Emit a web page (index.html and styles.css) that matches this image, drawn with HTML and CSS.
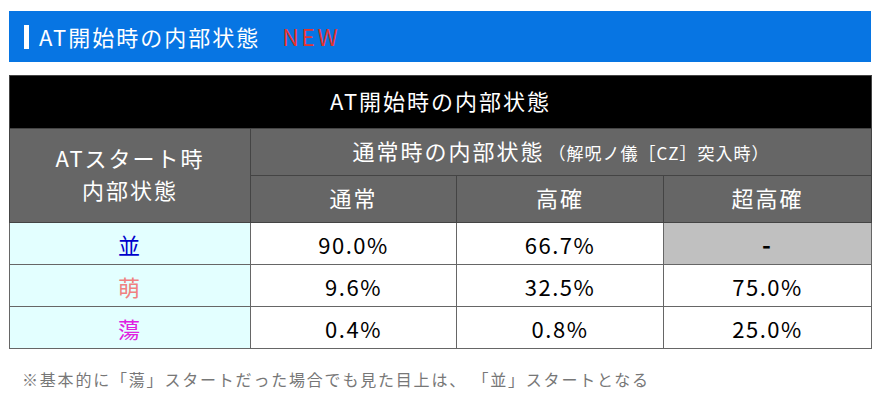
FILE: index.html
```html
<!DOCTYPE html>
<html lang="ja">
<head>
<meta charset="utf-8">
<title>AT開始時の内部状態</title>
<link rel="stylesheet" href="styles.css">
</head>
<body>
<div class="page">
  <h2 class="title"><span class="bar"></span><span class="title-text">AT開始時の内部状態</span><span class="new">NEW</span></h2>
  <table class="rate">
    <colgroup><col class="c1"><col class="c2"><col class="c3"><col class="c4"></colgroup>
    <thead>
      <tr><th colspan="4" class="top">AT開始時の内部状態</th></tr>
      <tr><th rowspan="2" class="h first">ATスタート時<br>内部状態</th><th colspan="3" class="h">通常時の内部状態<span class="sub">（解呪ノ儀［CZ］突入時）</span></th></tr>
      <tr><th class="h">通常</th><th class="h">高確</th><th class="h">超高確</th></tr>
    </thead>
    <tbody>
      <tr><td class="state nami">並</td><td class="num">90.0%</td><td class="num">66.7%</td><td class="none"><span class="dash">-</span></td></tr>
      <tr><td class="state moe">萌</td><td class="num">9.6%</td><td class="num">32.5%</td><td class="num">75.0%</td></tr>
      <tr><td class="state to">蕩</td><td class="num">0.4%</td><td class="num">0.8%</td><td class="num">25.0%</td></tr>
    </tbody>
  </table>
  <p class="note">※基本的に「蕩」スタートだった場合でも見た目上は、 「並」スタートとなる</p>
</div>
</body>
</html>
```

FILE: styles.css
```css
body {
  margin: 0;
  background: #fff;
  font-family: "Noto Sans CJK JP", sans-serif;
}
.page {
  padding: 11px 9px 0;
}
.title {
  margin: 0;
  height: 51px;
  box-sizing: border-box;
  padding-bottom: 2px;
  background: #0775e3;
  display: flex;
  align-items: center;
  padding-left: 15px;
  color: #fff;
  font-weight: normal;
  font-size: 22px;
  letter-spacing: 2px;
}
.bar {
  width: 5px;
  height: 24px;
  background: #fff;
  margin-right: 10px;
  margin-top: 2px;
}
.new {
  color: #e3342f;
  margin-left: 22px;
  font-size: 23px;
  letter-spacing: 2.5px;
}
.rate {
  margin-top: 13px;
  width: 862px;
  border-collapse: collapse;
  table-layout: fixed;
  font-size: 22px;
  letter-spacing: 2px;
}
col.c1 { width: 241px; }
col.c2 { width: 206px; }
col.c3 { width: 207px; }
col.c4 { width: 208px; }
th, td {
  border: 1px solid #666;
  padding: 0;
  text-align: center;
  font-weight: normal;
}
th {
  padding-bottom: 5px;
}
.top {
  background: #000;
  color: #fff;
  height: 47px;
  border-color: #444;
}
.h {
  background: #666;
  color: #fff;
  height: 41px;
  border-color: #444;
}
.first {
  line-height: 32px;
}
.sub {
  font-size: 17px;
  letter-spacing: 1px;
  margin-left: 4px;
}
td {
  height: 41px;
  color: #000;
  background: #fff;
}
.num {
  letter-spacing: 1.5px;
}
.state { background: #e3ffff; }
.nami { color: #0000cc; }
.moe { color: #f08080; }
.to { color: #e020e0; }
.none { background: #c0c0c0; }
.dash {
  font-weight: bold;
  font-size: 24px;
}
.note {
  margin: 18px 0 0 13px;
  font-size: 16px;
  line-height: 24px;
  letter-spacing: 1.8px;
  color: #777;
}
```
